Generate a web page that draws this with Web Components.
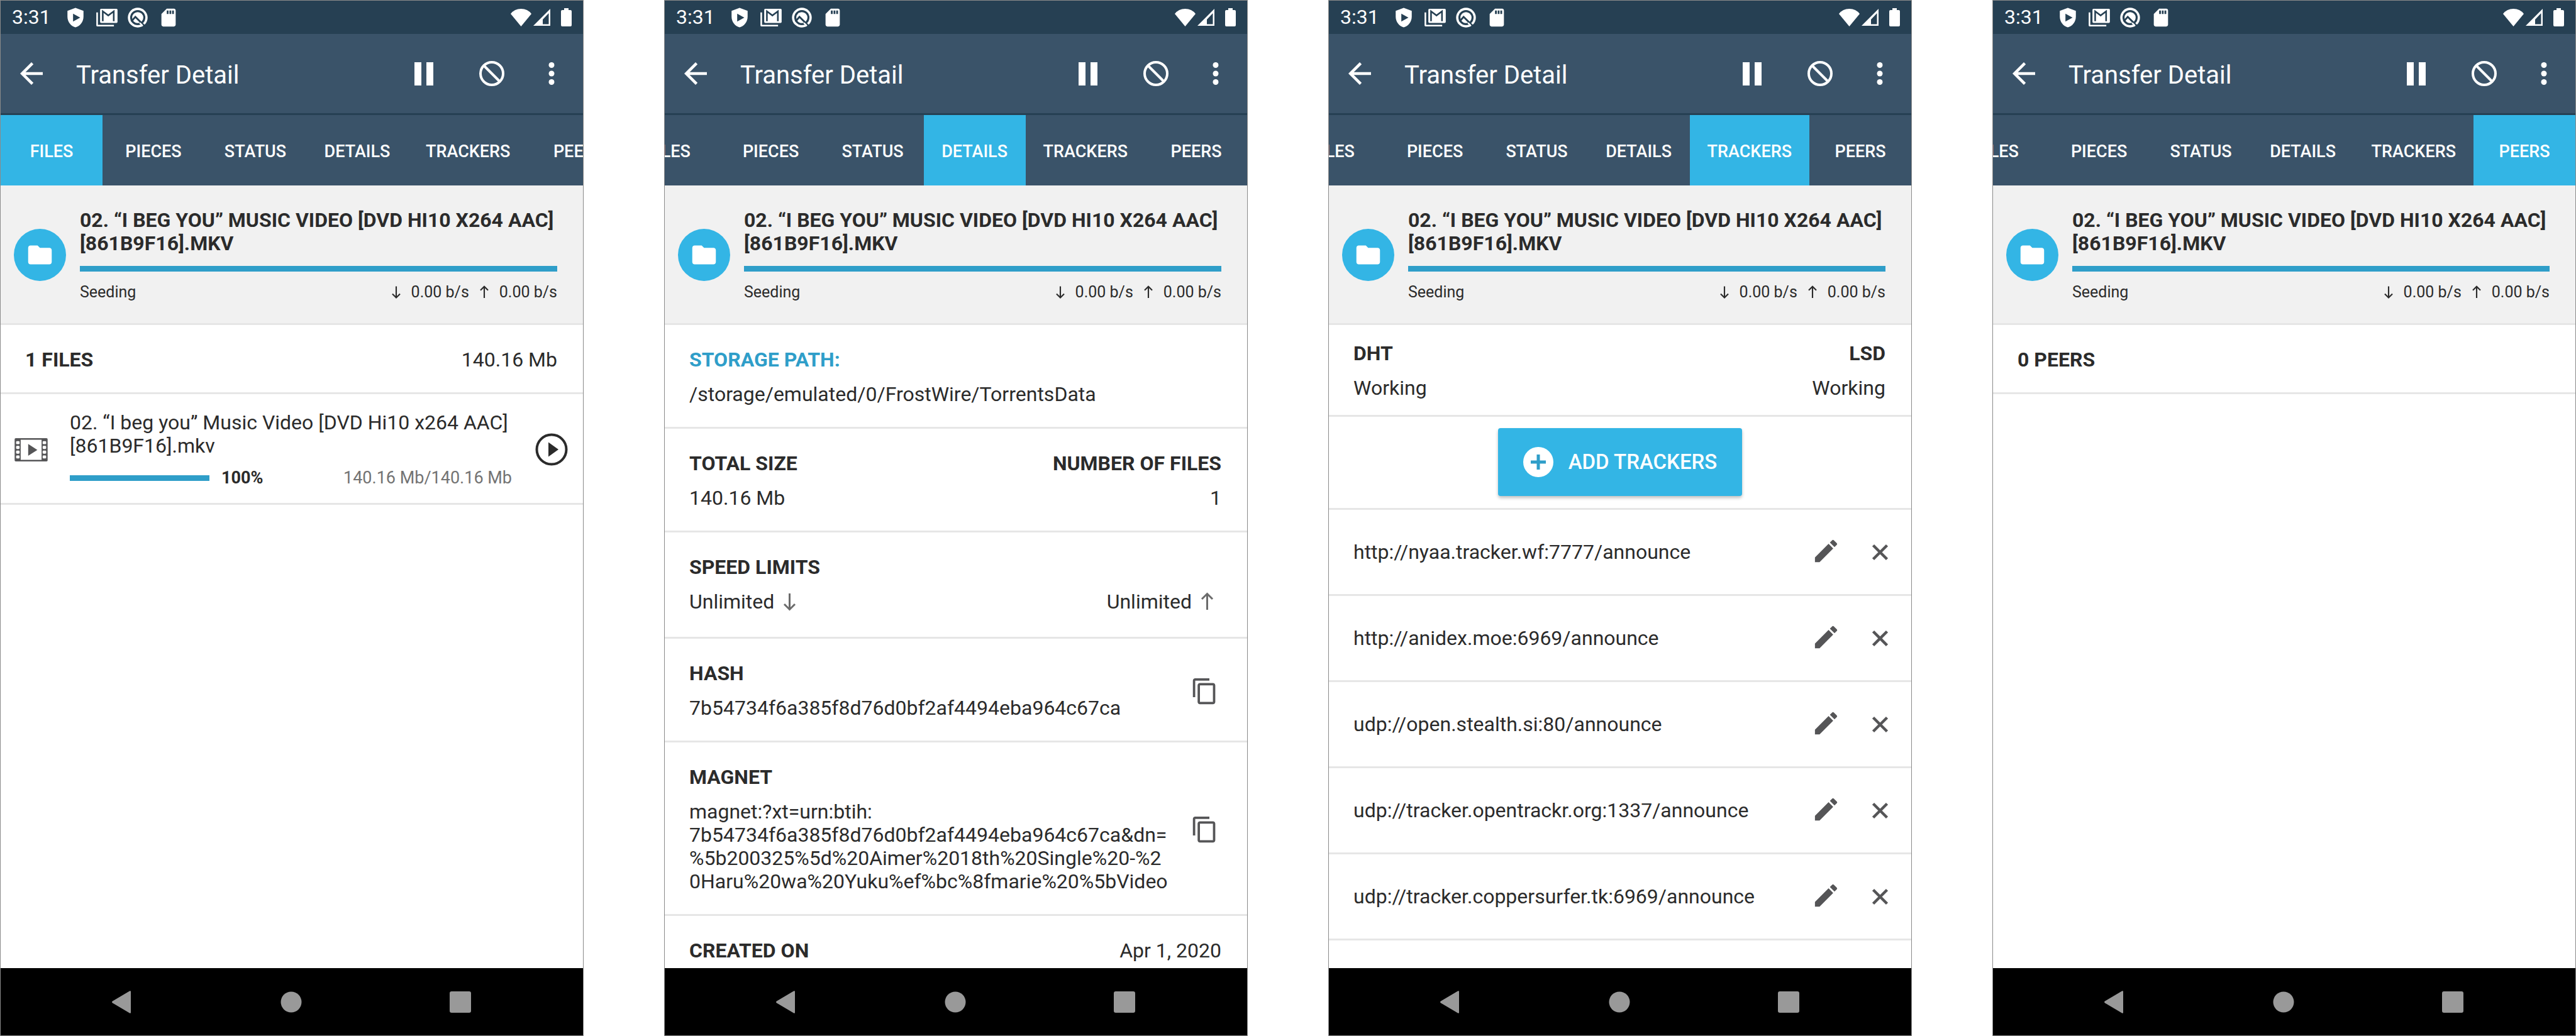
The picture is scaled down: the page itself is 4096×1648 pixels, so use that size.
<!DOCTYPE html>
<html lang="en">
<head>
<meta charset="utf-8">
<title>Transfer Detail</title>
<style>
  :root {
    --toolbar: #3a5369;
    --statusbar: #264053;
    --accent: #33b5e5;
    --accent-dark: #2f9ec9;
    --ink: #2b2b2b;
    --muted: #737373;
    --glyph: #555557;
    --line: #e6e6e6;
  }
  body {
    margin: 0;
    background: #fff;
    color: var(--ink);
    font-family: Roboto, "Liberation Sans", sans-serif;
    font-size: 32px;
    line-height: 37px;
  }
  main {
    display: grid;
    grid-template-columns: repeat(4, minmax(0, 1fr));
    gap: 128px;
    height: 100vh;
  }
</style>
</head>
<body>
<main>
  <phone-screen tab="Files">
    <section-header><span>1 FILES</span><span slot="end">140.16 Mb</span></section-header>
    <file-row percent="100" size="140.16 Mb/140.16 Mb">02. “I beg you” Music Video [DVD Hi10 x264 AAC] [861B9F16].mkv</file-row>
  </phone-screen>

  <phone-screen tab="Details">
    <info-section accent label="STORAGE PATH:">/storage/emulated/0/FrostWire/TorrentsData</info-section>
    <info-section label="TOTAL SIZE" end-label="NUMBER OF FILES">140.16 Mb<span slot="end">1</span></info-section>
    <info-section tall label="SPEED LIMITS">Unlimited<ui-icon name="down"></ui-icon><span slot="end">Unlimited</span><ui-icon slot="end" name="up"></ui-icon></info-section>
    <info-section copy label="HASH">7b54734f6a385f8d76d0bf2af4494eba964c67ca</info-section>
    <info-section copy label="MAGNET">magnet:?xt=urn:btih:<br>7b54734f6a385f8d76d0bf2af4494eba964c67ca&amp;dn=<br>%5b200325%5d%20Aimer%2018th%20Single%20-%2<br>0Haru%20wa%20Yuku%ef%bc%8fmarie%20%5bVideo</info-section>
    <section-header><span>CREATED ON</span><span slot="end">Apr 1, 2020</span></section-header>
  </phone-screen>

  <phone-screen tab="Trackers">
    <info-section compact label="DHT" end-label="LSD">Working<span slot="end">Working</span></info-section>
    <add-trackers></add-trackers>
    <tracker-row>http://nyaa.tracker.wf:7777/announce</tracker-row>
    <tracker-row>http://anidex.moe:6969/announce</tracker-row>
    <tracker-row>udp://open.stealth.si:80/announce</tracker-row>
    <tracker-row>udp://tracker.opentrackr.org:1337/announce</tracker-row>
    <tracker-row>udp://tracker.coppersurfer.tk:6969/announce</tracker-row>
  </phone-screen>

  <phone-screen tab="Peers">
    <section-header><span>0 PEERS</span></section-header>
  </phone-screen>
</main>

<script>
const ICONS = {
  shield: ['0 0 24 24', '<path fill-rule="evenodd" d="M12 1 3 4.4V11c0 5.6 3.8 10.700 9 12 5.200-1.300 9-6.400 9-12V4.400zM9.300 7.600v8.800l8-4.400z"/>'],
  mail: ['0 0 118 98', '<path d="M0 20h9v69h89v9H5q-5 0-5-5z"/><rect x="21" width="97" height="79" rx="6"/><path d="M36 69V14L66.500 37 97 14v55" fill="none" stroke="var(--statusbar)" stroke-width="9"/>'],
  search: ['0 0 110 110', '<circle cx="55" cy="55" r="54"/><circle cx="55" cy="55" r="36" fill="none" stroke="var(--statusbar)" stroke-width="11"/><path d="M20 76 42 51 92 101" fill="none" stroke="var(--statusbar)" stroke-width="10"/><path d="M66 84 82 100" stroke="#fff" stroke-width="8"/>'],
  sd: ['0 0 24 24', '<path fill-rule="evenodd" d="M18 2h-8L4 8v12c0 1.100.9 2 2 2h12c1.100 0 2-.9 2-2V4c0-1.100-.9-2-2-2zM10 4h2v4h-2zm3 0h2v4h-2zm3 0h2v4h-2z"/>'],
  wifi: ['0 0 33 28', '<path d="M16.500 28 0 8Q6 0 16.500 0T33 8z"/>'],
  signal: ['0 0 27 27', '<path fill-rule="evenodd" d="M27 0v27H0zM24.500 7v17.500H15V17z"/>'],
  battery: ['0 0 17 29', '<path d="M5 0h7v3h3q2 0 2 2v22q0 2-2 2H2q-2 0-2-2V5q0-2 2-2h3z"/>'],
  back: ['0 0 24 24', '<path d="M20 11H7.830l5.590-5.590L12 4l-8 8 8 8 1.410-1.410L7.830 13H20z"/>'],
  pause: ['0 0 54 54', '<path d="M12 9h11v37H12zM31 9h11v37H31z"/>'],
  block: ['0 0 54 54', '<g fill="none" stroke="currentColor" stroke-width="4"><circle cx="27" cy="27" r="18"/><path d="M14.500 14.500 39.500 39.500"/></g>'],
  more: ['0 0 24 24', '<circle cx="12" cy="6" r="2"/><circle cx="12" cy="12" r="2"/><circle cx="12" cy="18" r="2"/>'],
  folder: ['0 0 24 24', '<path d="M10 4H4c-1.100 0-1.990.9-1.990 2L2 18c0 1.100.9 2 2 2h16c1.100 0 2-.9 2-2V8c0-1.100-.9-2-2-2h-8z"/>'],
  film: ['0 0 180 127', '<path fill-rule="evenodd" d="M6 0h168q6 0 6 6v115q0 6-6 6H6q-6 0-6-6V6q0-6 6-6zM33 9v109h114V9z"/><g fill="#fff"><rect x="8" y="16" width="19" height="17" rx="5"/><rect x="8" y="42" width="19" height="17" rx="5"/><rect x="8" y="68" width="19" height="17" rx="5"/><rect x="8" y="94" width="19" height="17" rx="5"/><rect x="153" y="16" width="19" height="17" rx="5"/><rect x="153" y="42" width="19" height="17" rx="5"/><rect x="153" y="68" width="19" height="17" rx="5"/><rect x="153" y="94" width="19" height="17" rx="5"/></g><path d="M74 32v64l50-32z"/>'],
  play: ['0 0 52 52', '<circle cx="26" cy="26" r="23.500" fill="none" stroke="currentColor" stroke-width="4"/><path d="M21 14.500v23L37 26z"/>'],
  copy: ['0 0 24 24', '<path d="M16 1H4c-1.100 0-2 .9-2 2v14h2V3h12V1zm3 4H8c-1.100 0-2 .9-2 2v14c0 1.100.9 2 2 2h11c1.100 0 2-.9 2-2V7c0-1.100-.9-2-2-2zm0 16H8V7h11v14z"/>'],
  edit: ['0 0 24 24', '<path d="M3 17.250V21h3.750L17.810 9.940l-3.750-3.750zM20.710 7.040a1 1 0 0 0 0-1.410l-2.340-2.340a1 1 0 0 0-1.410 0l-1.830 1.830 3.750 3.750z"/>'],
  close: ['0 0 43 43', '<path d="M10.500 10.500 32.500 32.500M32.500 10.500 10.500 32.500" stroke="currentColor" stroke-width="4.500"/>'],
  plus: ['0 0 48 48', '<circle cx="24" cy="24" r="24" fill="#fff"/><path d="M24 12v24M12 24h24" stroke="var(--accent-dark)" stroke-width="5"/>'],
  down: ['0 0 45 45', '<path d="M22.500 9v25M14 26l8.500 8.500L31 26" fill="none" stroke="currentColor" stroke-width="3"/>'],
  up: ['0 0 45 45', '<path d="M22.500 35V10M14 18l8.500-8.500L31 18" fill="none" stroke="currentColor" stroke-width="3"/>'],
  navBack: ['0 0 34 36', '<path d="M31 1.500v33q0 2-2 1L2 19.500q-2-1.500 0-3L29 .5q2-1 2 1z"/>'],
  navHome: ['0 0 34 34', '<circle cx="17" cy="17" r="16.500"/>'],
  navRecent: ['0 0 34 34', '<rect width="34" height="34" rx="3"/>']
};

function define(name, template) {
  customElements.define(name, class extends HTMLElement {
    connectedCallback() {
      if (this.shadowRoot) return;
      this.attachShadow({ mode: 'open' }).innerHTML =
        typeof template === 'function' ? template(this) : template;
    }
  });
}

const BUTTON = `button { margin: 0; padding: 0; border: 0; background: none; color: inherit; font: inherit; display: block; cursor: pointer; }`;

define('ui-icon', el => {
  const [box, body] = ICONS[el.getAttribute('name')];
  return `<style>
    :host { display: block; flex: none; width: 45px; height: 45px; }
    svg { display: block; width: 100%; height: 100%; fill: currentColor; }
  </style><svg viewBox="${box}" aria-hidden="true">${body}</svg>`;
});

define('status-bar', `<style>
    :host { display: flex; justify-content: space-between; align-items: center; height: 53px; padding: 0 18px; background: var(--statusbar); color: #fff; }
    div { display: flex; align-items: center; }
    .left { gap: 16px; }
    .time { margin-right: 6px; }
    .left ui-icon { width: 34px; height: 34px; }
    .left ui-icon.mail { height: 28px; }
    .left ui-icon.search { width: 32px; }
    .wifi { width: 33px; height: 28px; }
    .signal { width: 27px; height: 27px; margin: 0 17px 0 3px; }
    .battery { width: 17px; height: 29px; }
  </style>
  <div class="left"><span class="time">3:31</span>
    <ui-icon name="shield"></ui-icon><ui-icon class="mail" name="mail"></ui-icon><ui-icon class="search" name="search"></ui-icon><ui-icon name="sd"></ui-icon></div>
  <div><ui-icon class="wifi" name="wifi"></ui-icon><ui-icon class="signal" name="signal"></ui-icon><ui-icon class="battery" name="battery"></ui-icon></div>`);

define('app-bar', `<style>${BUTTON}
    :host { display: flex; align-items: center; height: 126px; padding: 0 23px 0 22px; background: var(--toolbar); border-bottom: 3px solid var(--statusbar); color: #fff; }
    h1 { flex: 1; margin: 0; padding: 4px 0 0 44px; font-size: 40px; line-height: 47px; font-weight: 400; }
    ui-icon { width: 54px; height: 54px; }
    .actions { display: flex; gap: 54px; }
    .more { margin-left: -13px; }
  </style>
  <button aria-label="Back"><ui-icon name="back"></ui-icon></button>
  <h1>Transfer Detail</h1>
  <div class="actions">
    <button aria-label="Pause"><ui-icon name="pause"></ui-icon></button>
    <button aria-label="Stop"><ui-icon name="block"></ui-icon></button>
    <button class="more" aria-label="More options"><ui-icon name="more"></ui-icon></button>
  </div>`);

define('tab-strip', el => `<style>${BUTTON}
    :host { display: flex; height: 112px; overflow: hidden; background: var(--toolbar); color: #fff; font-size: 27px; line-height: 32px; font-weight: 500; }
    :host([scrolled]) { justify-content: flex-end; }
    button { flex: none; min-width: 162px; padding: 4px 28px 0; text-transform: uppercase; }
    button[aria-selected="true"] { background: var(--accent); }
  </style>` + ['Files', 'Pieces', 'Status', 'Details', 'Trackers', 'Peers'].map(t =>
    `<button role="tab" aria-selected="${t === el.getAttribute('active')}">${t}</button>`).join(''));

define('transfer-summary', `<style>
    :host { display: flex; align-items: center; gap: 22px; padding: 37px 41px 35px 21px; background: #f1f1f1; border-bottom: 3px solid var(--line); }
    .badge { display: grid; place-items: center; flex: none; width: 83px; height: 83px; border-radius: 50%; background: var(--accent); color: #fff; }
    .body { flex: 1; min-width: 0; }
    h2 { margin: 0; font: inherit; font-weight: 700; text-transform: uppercase; }
    .bar { height: 9px; margin: 17px 0 18px; background: var(--accent-dark); }
    .stats { display: flex; align-items: center; font-size: 25px; line-height: 29px; }
    .state { flex: 1; }
    .stats ui-icon { width: 32px; height: 32px; margin: -2px 8px; }
  </style>
  <div class="badge"><ui-icon name="folder"></ui-icon></div>
  <div class="body">
    <h2>02. “I beg you” Music Video [DVD Hi10 x264 AAC] [861B9F16].mkv</h2>
    <div class="bar" role="progressbar" aria-label="Transfer progress" aria-valuenow="100"></div>
    <div class="stats"><span class="state">Seeding</span><ui-icon name="down"></ui-icon><span>0.00 b/s</span><ui-icon name="up"></ui-icon><span>0.00 b/s</span></div>
  </div>`);

define('section-header', `<style>
    :host { display: flex; justify-content: space-between; padding: 37px 41px 33px 39px; border-bottom: 3px solid var(--line); }
    b { font-weight: 700; }
  </style><b><slot></slot></b><slot name="end"></slot>`);

define('file-row', el => `<style>${BUTTON}
    :host { display: flex; align-items: center; padding: 27px 24px 24px 22px; border-bottom: 3px solid var(--line); }
    .film { width: 53px; height: 37px; margin-right: 35px; color: var(--glyph); }
    .body { flex: 1; min-width: 0; }
    .meta { display: flex; align-items: center; margin-top: 17px; font-size: 27px; line-height: 31px; }
    .bar { width: 222px; height: 9px; margin-right: 19px; background: var(--accent-dark); }
    b { flex: 1; font-weight: 700; }
    .size { color: var(--muted); }
    button { margin-left: 37px; }
    button ui-icon { width: 52px; height: 52px; }
  </style>
  <ui-icon class="film" name="film"></ui-icon>
  <div class="body"><slot></slot>
    <div class="meta"><div class="bar" role="progressbar" aria-label="File progress" aria-valuenow="${el.getAttribute('percent')}"></div><b>${el.getAttribute('percent')}%</b><span class="size">${el.getAttribute('size')}</span></div>
  </div>
  <button aria-label="Play"><ui-icon name="play"></ui-icon></button>`);

define('info-section', el => `<style>${BUTTON}
    :host { display: flex; align-items: center; padding: 37px 41px 33px 39px; border-bottom: 3px solid var(--line); }
    :host([compact]) { padding-top: 27px; padding-bottom: 24px; }
    :host([accent]) b { color: var(--accent-dark); }
    .body { flex: 1; min-width: 0; }
    .row, .end, .start { display: flex; align-items: center; }
    .row { justify-content: space-between; }
    .value { margin-top: 18px; }
    :host([tall]) .value { margin-top: 14px; min-height: 45px; }
    b { font-weight: 700; }
    ::slotted(ui-icon) { color: #6b6b6b; margin-left: 2px; }
    button { margin-right: 4px; color: var(--glyph); }
  </style>
  <div class="body">
    <div class="row"><b>${el.getAttribute('label')}</b><b>${el.getAttribute('end-label') || ''}</b></div>
    <div class="row value"><div class="${el.hasAttribute('tall') ? 'start' : 'text'}"><slot></slot></div><div class="end"><slot name="end"></slot></div></div>
  </div>${el.hasAttribute('copy') ? '<button aria-label="Copy"><ui-icon name="copy"></ui-icon></button>' : ''}`);

define('add-trackers', `<style>${BUTTON}
    :host { display: flex; justify-content: center; padding: 18px 0 19px; border-bottom: 3px solid var(--line); }
    button { display: flex; align-items: center; gap: 24px; height: 108px; padding: 0 40px; border-radius: 4px; background: var(--accent); color: #fff; font-size: 33px; line-height: 40px; font-weight: 500; box-shadow: 0 3px 5px rgba(0, 0, 0, .25); }
    ui-icon { width: 48px; height: 48px; }
  </style><button><ui-icon name="plus"></ui-icon>ADD TRACKERS</button>`);

define('tracker-row', `<style>${BUTTON}
    :host { display: flex; align-items: center; height: 134px; padding: 0 28px 0 39px; border-bottom: 3px solid var(--line); }
    span { flex: 1; }
    button { color: var(--glyph); }
    .edit { width: 47px; height: 47px; margin: -4px 41px 0 0; }
    .close { width: 43px; height: 43px; }
  </style><span><slot></slot></span>
  <button aria-label="Edit tracker"><ui-icon class="edit" name="edit"></ui-icon></button>
  <button aria-label="Remove tracker"><ui-icon class="close" name="close"></ui-icon></button>`);

define('nav-bar', `<style>${BUTTON}
    :host { display: flex; justify-content: space-between; align-items: center; height: 107px; padding: 0 178px 0 176px; background: #000; color: #999; }
    ui-icon { width: 34px; height: 34px; }
    .back { height: 36px; }
  </style>
  <button aria-label="Back"><ui-icon class="back" name="navBack"></ui-icon></button>
  <button aria-label="Home"><ui-icon name="navHome"></ui-icon></button>
  <button aria-label="Recent apps"><ui-icon name="navRecent"></ui-icon></button>`);

define('phone-screen', el => `<style>
    :host { display: flex; flex-direction: column; min-width: 0; min-height: 0; border: 1px solid #8a8a8a; background: #fff; }
    status-bar, app-bar, tab-strip, transfer-summary, nav-bar { flex: none; }
    .content { flex: 1; min-height: 0; overflow: hidden; }
  </style>
  <status-bar></status-bar><app-bar></app-bar>
  <tab-strip role="tablist" active="${el.getAttribute('tab')}"${el.getAttribute('tab') === 'Files' ? '' : ' scrolled'}></tab-strip>
  <transfer-summary></transfer-summary>
  <div class="content"><slot></slot></div>
  <nav-bar></nav-bar>`);
</script>
</body>
</html>
